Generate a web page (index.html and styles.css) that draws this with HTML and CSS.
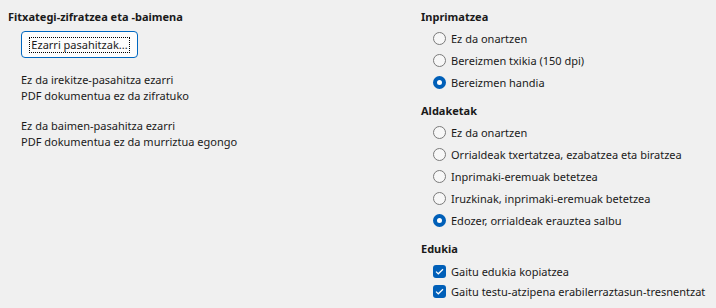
FILE: index.html
```html
<!DOCTYPE html>
<html lang="eu">
<head>
  <meta charset="UTF-8">
  <title>Fitxategi-zifratzea eta -baimena</title>
  <link rel="stylesheet" href="styles.css">
</head>
<body>
  <div class="page">
    <div class="column column-left">
      <div class="heading">Fitxategi-zifratzea eta -baimena</div>
      <div class="button-row">
        <button class="button"><span class="focus-ring">Ezarri pasahitzak...</span></button>
      </div>
      <div class="note">
        <div>Ez da irekitze-pasahitza ezarri</div>
        <div>PDF dokumentua ez da zifratuko</div>
      </div>
      <div class="note">
        <div>Ez da baimen-pasahitza ezarri</div>
        <div>PDF dokumentua ez da murriztua egongo</div>
      </div>
    </div>

    <div class="column column-right">
      <div class="group">
        <div class="heading">Inprimatzea</div>
        <div class="option"><span class="radio"></span>Ez da onartzen</div>
        <div class="option"><span class="radio"></span>Bereizmen txikia (150 dpi)</div>
        <div class="option"><span class="radio radio-checked"></span>Bereizmen handia</div>
      </div>

      <div class="group">
        <div class="heading">Aldaketak</div>
        <div class="option"><span class="radio"></span>Ez da onartzen</div>
        <div class="option"><span class="radio"></span>Orrialdeak txertatzea, ezabatzea eta biratzea</div>
        <div class="option"><span class="radio"></span>Inprimaki-eremuak betetzea</div>
        <div class="option"><span class="radio"></span>Iruzkinak, inprimaki-eremuak betetzea</div>
        <div class="option"><span class="radio radio-checked"></span>Edozer, orrialdeak erauztea salbu</div>
      </div>

      <div class="group group-checks">
        <div class="heading">Edukia</div>
        <div class="option option-check">
          <span class="checkbox">
            <svg width="9" height="7" viewBox="0 0 9 7"><path d="M1 3.6 L3.3 5.8 L8 1.2" fill="none" stroke="#fff" stroke-width="1.2"/></svg>
          </span>Gaitu edukia kopiatzea
        </div>
        <div class="option option-check">
          <span class="checkbox">
            <svg width="9" height="7" viewBox="0 0 9 7"><path d="M1 3.6 L3.3 5.8 L8 1.2" fill="none" stroke="#fff" stroke-width="1.2"/></svg>
          </span>Gaitu testu-atzipena erabilerraztasun-tresnentzat
        </div>
      </div>
    </div>
  </div>
</body>
</html>
```

FILE: styles.css
```css
body {
  margin: 0;
  padding: 0;
  background-color: #f0f0f0;
  font-family: 'Noto Sans', 'Open Sans', sans-serif;
  font-size: 11px;
  color: #1a1a1a;
}

.page {
  display: flex;
  padding-top: 8px;
}

.column-left {
  width: 421px;
  padding-left: 8px;
  box-sizing: border-box;
}

.column-right {
  flex: 1;
  white-space: nowrap;
}

.heading {
  font-weight: bold;
  line-height: 17px;
}

.button-row {
  padding-left: 13px;
  margin-top: 6px;
}

.button {
  width: 117px;
  height: 27px;
  padding: 0;
  background-color: #fdfdfd;
  border: 1px solid #0067c0;
  border-radius: 4px;
  font-family: inherit;
  font-size: 11px;
  color: #1a1a1a;
  display: flex;
  align-items: center;
  justify-content: center;
}

.focus-ring {
  display: inline-block;
  padding: 0 1px;
  line-height: 14px;
  outline: 1px dotted #000;
}

.note {
  padding-left: 13px;
  line-height: 16px;
  margin-top: 14px;
}

.group + .group {
  margin-top: 9px;
}

.group .heading {
  margin-bottom: 2px;
}

.group-checks .heading {
  margin-bottom: 4px;
}

.option {
  display: flex;
  align-items: center;
  height: 22px;
  padding-left: 12px;
}

.option-check {
  height: 20px;
}

.radio {
  width: 13px;
  height: 13px;
  box-sizing: border-box;
  border: 1px solid #7a7a7a;
  border-radius: 50%;
  background-color: #f7f7f7;
  margin-right: 5px;
}

.radio-checked {
  border: 4px solid #005fb8;
  background-color: #fff;
}

.checkbox {
  width: 13px;
  height: 13px;
  border-radius: 3px;
  background-color: #005fb8;
  margin-right: 5px;
  display: flex;
  align-items: center;
  justify-content: center;
}
```
